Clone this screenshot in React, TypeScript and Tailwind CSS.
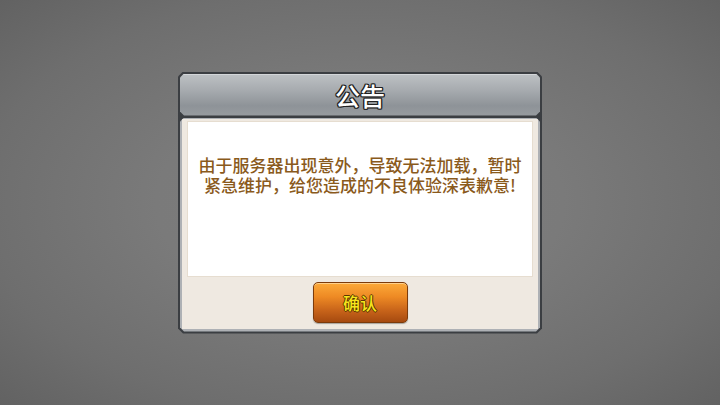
import React from "react";

const chamfer5 =
  "[clip-path:polygon(5px_0,calc(100%_-_5px)_0,100%_5px,100%_calc(100%_-_5px),calc(100%_-_5px)_100%,5px_100%,0_calc(100%_-_5px),0_5px)]";
const chamfer4 =
  "[clip-path:polygon(4px_0,calc(100%_-_4px)_0,100%_4px,100%_calc(100%_-_4px),calc(100%_-_4px)_100%,4px_100%,0_calc(100%_-_4px),0_4px)]";

const App = () => {
  return (
    <div className="flex h-[405px] w-full items-center justify-center bg-[radial-gradient(ellipse_at_center,#7e7e7e_0%,#7a7a7a_40%,#6e6e6e_75%,#626262_100%)] font-['Noto_Sans_CJK_SC','Noto_Sans',sans-serif]">
      {/* notice dialog */}
      <div className={`h-[262px] w-[364px] bg-[#3b3e42] p-[2px] ${chamfer5}`}>
        <div className="flex h-full flex-col gap-[2px]">
          <div
            className={`flex h-[42px] items-center justify-center border-t border-[#d3d6d9] bg-[linear-gradient(#bcc0c3,#a8acb0_35%,#8e9398_75%,#979b9f)] ${chamfer4}`}
          >
            <span className="text-[25px] font-medium leading-none text-white [text-shadow:1.2px_0_0_#222,-1.2px_0_0_#222,0_1.2px_0_#222,0_-1.2px_0_#222,1px_1px_0_#222,-1px_-1px_0_#222,1px_-1px_0_#222,-1px_1px_0_#222]">
              公告
            </span>
          </div>
          <div
            className={`flex flex-1 flex-col bg-[#aeb1b5] px-[2px] pb-[3px] pt-px ${chamfer4}`}
          >
            <div className="flex flex-1 flex-col bg-[#efe9e1] px-[5px] pt-[2px]">
              <div className="flex h-[156px] flex-col items-center border border-[#e6ddd0] bg-white pt-[33px] text-[17px] font-medium leading-[20px] text-[#8a5a1c]">
                <span className="block">由于服务器出现意外，导致无法加载，暂时</span>
                <span className="block">紧急维护，给您造成的不良体验深表歉意!</span>
              </div>
              <div className="flex flex-1 items-start justify-center pt-[5px]">
                <button className="flex h-[41px] w-[95px] items-center justify-center rounded-[5px] border border-[#7c3b0b] bg-[linear-gradient(#fcaa3a,#ee8a24_35%,#c8641a_70%,#a64a10)] shadow-[inset_0_1px_0_#ffd08a,0_1px_1px_rgba(0,0,0,0.3)]">
                  <span className="text-[17px] font-medium leading-none text-[#f6e41c] [text-shadow:1px_0_0_#5a3600,-1px_0_0_#5a3600,0_1px_0_#5a3600,0_-1px_0_#5a3600]">
                    确认
                  </span>
                </button>
              </div>
            </div>
          </div>
        </div>
      </div>
    </div>
  );
};

export default App;
